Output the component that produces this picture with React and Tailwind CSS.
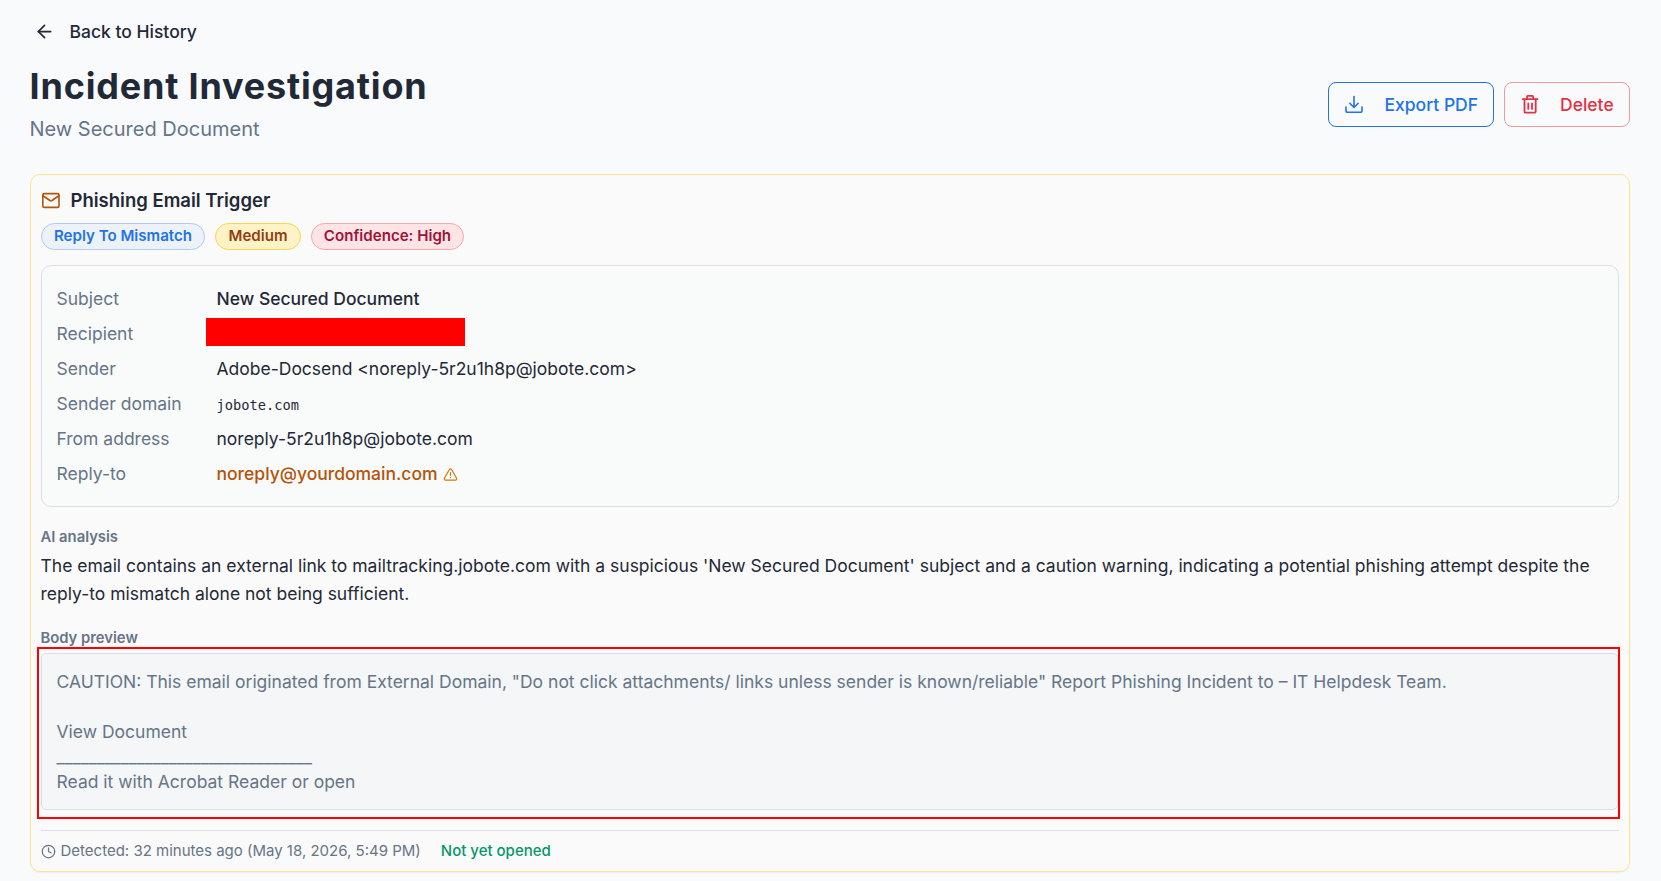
import React from 'react';
import { ArrowLeft, TriangleAlert, Clock } from 'lucide-react';

const DETAILS = [
  { label: 'Subject', value: 'New Secured Document', className: 'font-medium' },
  { label: 'Recipient', redacted: true },
  { label: 'Sender', value: 'Adobe-Docsend <noreply-5r2u1h8p@jobote.com>' },
  { label: 'Sender domain', value: 'jobote.com', className: "pt-px font-['DejaVu_Sans_Mono','Liberation_Mono',monospace] text-[13.7px]" },
  { label: 'From address', value: 'noreply-5r2u1h8p@jobote.com' },
  { label: 'Reply-to', value: 'noreply@yourdomain.com', className: 'font-medium text-[#b45309]', warning: true },
];

const BODY_PREVIEW = `CAUTION: This email originated from External Domain, "Do not click attachments/ links unless sender is known/reliable" Report Phishing Incident to – IT Helpdesk Team.

View Document
________________________________
Read it with Acrobat Reader or open`;

const DownloadIcon = ({ className }) => (
  <svg className={className} viewBox="0 0 20 20" fill="none" stroke="currentColor" strokeWidth={1.6} strokeLinecap="round" strokeLinejoin="round">
    <path d="M10 1.5v10.8M5.8 8.3l4.2 4.2 4.2-4.2" />
    <path d="M2 12v3.7a1.6 1.6 0 0 0 1.6 1.6h12.8a1.6 1.6 0 0 0 1.6-1.6V12" />
  </svg>
);

const TrashIcon = ({ className }) => (
  <svg className={className} viewBox="0 0 20 20" fill="none" stroke="currentColor" strokeWidth={1.8} strokeLinecap="round" strokeLinejoin="round">
    <path d="M2.8 4.2h14.6M7 4V1.9a1.1 1.1 0 0 1 1.1-1.1h4a1.1 1.1 0 0 1 1.1 1.1V4" />
    <path d="M4.5 4.4v12a1.3 1.3 0 0 0 1.3 1.3h8.6a1.3 1.3 0 0 0 1.3-1.3v-12M8.3 8.3v5.6M12 8.3v5.6" />
  </svg>
);

const MailIcon = ({ className }) => (
  <svg className={className} viewBox="0 0 20 20" fill="none" stroke="currentColor" strokeWidth={1.6} strokeLinecap="round" strokeLinejoin="round">
    <rect x="1.8" y="2.6" width="16.2" height="13.8" rx="1.5" />
    <path d="M2.3 5l6.6 4.5a1.8 1.8 0 0 0 2 0L17.5 5" />
  </svg>
);

const DetailRow = ({ label, value, className = '', redacted, warning }) => (
  <div className="flex h-[35px] items-center">
    <dt className="w-40 shrink-0 text-[#667587]">{label}</dt>
    <dd className="flex items-center">
      {redacted ? (
        <span className="-ml-[10.5px] -mt-[5px] h-7 w-[259px] bg-[#ff0000]" />
      ) : (
        <span className={className}>{value}</span>
      )}
      {warning && <TriangleAlert className="ml-[5px] h-[15px] w-[15px] text-[#d97706]" strokeWidth={1.9} />}
    </dd>
  </div>
);

const App = () => {
  return (
    <div className="h-[881px] overflow-hidden bg-[#f9fafc] pl-[30px] pr-[31px] font-['Inter',sans-serif] text-[17.5px] text-[#1f2937]">
      <button className="mt-[18px] flex h-7 items-center pl-1 font-medium">
        <ArrowLeft className="-mt-px mr-[14.5px] h-[21px] w-[21px]" strokeWidth={2} />
        Back to History
      </button>

      <header className="mt-[18px] flex h-[80px] items-start justify-between">
        <div>
          <h1 className="-ml-[0.5px] text-[36px] font-bold leading-[45px] tracking-[0.81px]">Incident Investigation</h1>
          <p className="-ml-[0.5px] mt-[6px] text-[20px] leading-7 text-[#667587]">New Secured Document</p>
        </div>
        <div className="mt-[18px] flex gap-[10px]">
          <button className="flex h-[45px] w-[166px] items-center rounded-lg border border-[#2272e8] pl-[15px] font-medium text-[#2272e8]">
            <DownloadIcon className="mr-[20.5px] h-5 w-5" />
            <span className="pt-px">Export PDF</span>
          </button>
          <button className="flex h-[45px] w-[126px] items-center rounded-lg border border-[#f498a0] pl-[15px] font-medium text-[#e33244]">
            <TrashIcon className="mr-[20px] h-5 w-5" />
            <span className="pt-px">Delete</span>
          </button>
        </div>
      </header>

      <section className="mt-[30px] h-[698px] rounded-[10px] border border-[#fde68a] bg-[#fafafa] px-[10px] shadow-xs">
        <div className="flex h-[51px] items-center gap-[9.5px]">
          <MailIcon className="h-5 w-5 text-[#b45309]" />
          <h2 className="text-[18.5px] font-semibold">Phishing Email Trigger</h2>
        </div>
        <div className="-mt-[3px] flex h-[27px] gap-[10px] text-[15.1px] font-semibold">
          <span className="flex w-[164px] items-center justify-center rounded-full border border-[#aecbf5] bg-[#edf2f8] text-[#2272e8]">Reply To Mismatch</span>
          <span className="flex w-[86px] items-center justify-center rounded-full border border-[#fcd34d] bg-[#fef3c7] text-[#92400e]">Medium</span>
          <span className="flex w-[153px] items-center justify-center rounded-full border border-[#fda4af] bg-[#ffe4e6] text-[#9f1239]">Confidence: High</span>
        </div>

        <dl className="mt-[15px] h-[242px] rounded-[10px] border border-[#d9dfe8] bg-[#f9fafa] px-[14.5px] pt-[16px]">
          {DETAILS.map((row) => (
            <DetailRow key={row.label} {...row} />
          ))}
        </dl>

        <h3 className="-ml-[0.5px] mt-[20px] text-[14.8px] font-semibold leading-5 text-[#667587]">AI analysis</h3>
        <p className="-ml-[0.5px] mt-[5px] leading-7">
          The email contains an external link to mailtracking.jobote.com with a suspicious 'New Secured Document' subject and a caution warning, indicating a potential phishing attempt despite the reply-to mismatch alone not being sufficient.
        </p>

        <h3 className="-ml-[0.5px] mt-[20px] text-[14.8px] font-semibold leading-5 text-[#667587]">Body preview</h3>
        <div className="-ml-[4px] -mt-px h-[172px] w-[1583px] border-2 border-[#ff0000] pl-[2px] pt-[4px]">
          <pre className="h-[157px] rounded-[5px] border border-[#d9dfe8] bg-[#f4f6f8] px-[14.5px] pt-[15px] font-['Inter',sans-serif] leading-[25px] text-[#667587]">{BODY_PREVIEW}</pre>
        </div>

        <footer className="mt-[11px] flex items-center border-t border-[#d9dfe8] pt-[10px] text-[15px] leading-5 text-[#667587]">
          <Clock className="mr-[4.5px] h-[15px] w-[15px]" strokeWidth={2} />
          Detected: 32 minutes ago (May 18, 2026, 5:49 PM)
          <span className="ml-5 font-medium text-[#059669]">Not yet opened</span>
        </footer>
      </section>
    </div>
  );
};

export default App;
